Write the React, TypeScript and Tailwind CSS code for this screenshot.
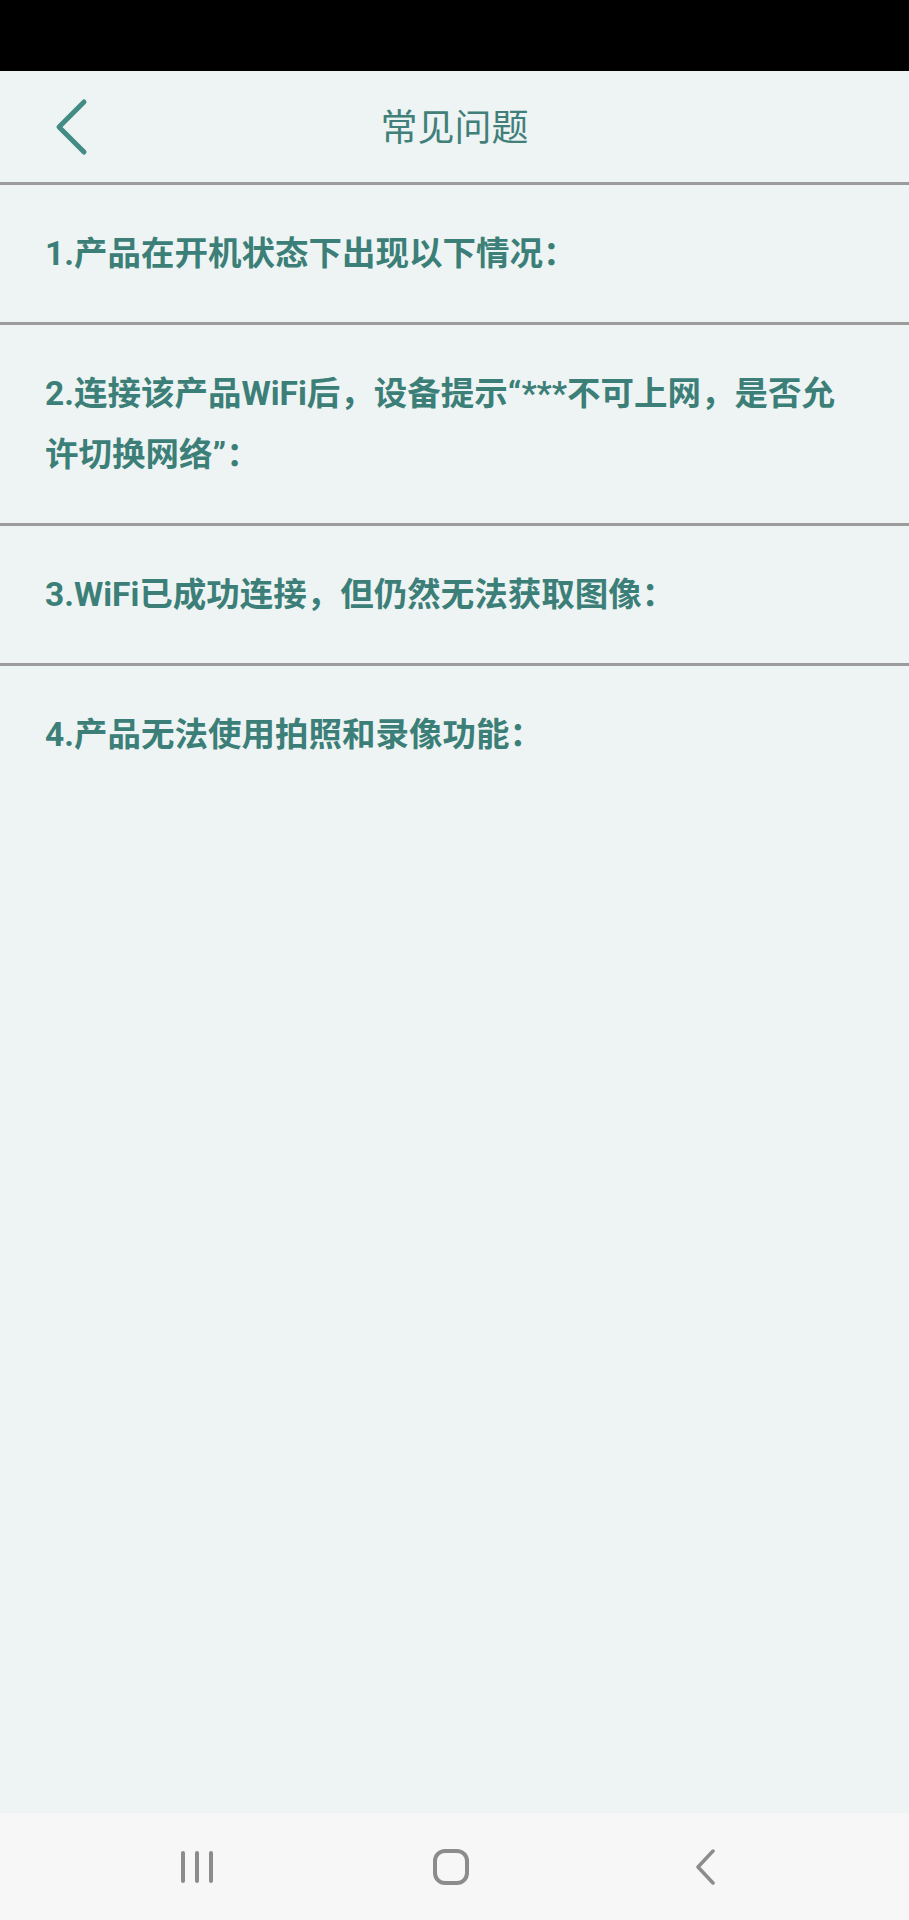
const questions = [
  "1.产品在开机状态下出现以下情况：",
  "2.连接该产品WiFi后，设备提示“***不可上网，是否允许切换网络”：",
  "3.WiFi已成功连接，但仍然无法获取图像：",
  "4.产品无法使用拍照和录像功能："
];

function BackIcon() {
  return (
    <svg width="40" height="60" viewBox="0 0 40 60" fill="none">
      <path d="M32 5 L7 30 L32 55" stroke="#438c86" strokeWidth="5" strokeLinecap="round" strokeLinejoin="round" />
    </svg>
  );
}

function NavBar() {
  return (
    <div className="flex h-[107px] items-center justify-center bg-[#f7f7f7] pr-[8px]">
      <div className="flex w-[254px] justify-center">
        <svg width="32" height="34" viewBox="0 0 32 34" fill="#8c8c8c">
          <rect x="0" y="1" width="4" height="32" rx="2" />
          <rect x="14" y="1" width="4" height="32" rx="2" />
          <rect x="28" y="1" width="4" height="32" rx="2" />
        </svg>
      </div>
      <div className="flex w-[254px] justify-center">
        <svg width="36" height="36" viewBox="0 0 36 36" fill="none">
          <rect x="2" y="2" width="32" height="32" rx="10" stroke="#8c8c8c" strokeWidth="4" />
        </svg>
      </div>
      <div className="flex w-[254px] justify-center">
        <svg width="22" height="36" viewBox="0 0 22 36" fill="none">
          <path d="M19 2 L4 18 L19 34" stroke="#8c8c8c" strokeWidth="3.5" strokeLinecap="round" strokeLinejoin="round" />
        </svg>
      </div>
    </div>
  );
}

export default function App() {
  return (
    <div
      className="flex h-[1920px] w-full flex-col bg-[#eef4f3]"
      style={{ fontFamily: 'Roboto, "Noto Sans CJK SC", sans-serif' }}
    >
      <div className="h-[71px] bg-black" />

      <header className="grid h-[114px] grid-cols-[1fr_auto_1fr] items-center border-b-[3px] border-[#9c9c9c]">
        <div className="flex pl-[52px]">
          <BackIcon />
        </div>
        <h1 className="mt-[5px] text-[37px] font-normal text-[#417f7a]">常见问题</h1>
        <div />
      </header>

      <ul>
        {questions.map((q, i) => (
          <li
            key={q}
            className={
              i < questions.length - 1
                ? "border-b-[3px] border-[#9c9c9c] px-[45px] py-[38px] text-[33.5px] leading-[61px] font-bold text-[#3c7f78]"
                : "px-[45px] py-[38px] text-[33.5px] leading-[61px] font-bold text-[#3c7f78]"
            }
          >
            {q}
          </li>
        ))}
      </ul>

      <div className="flex-1" />
      <NavBar />
    </div>
  );
}
